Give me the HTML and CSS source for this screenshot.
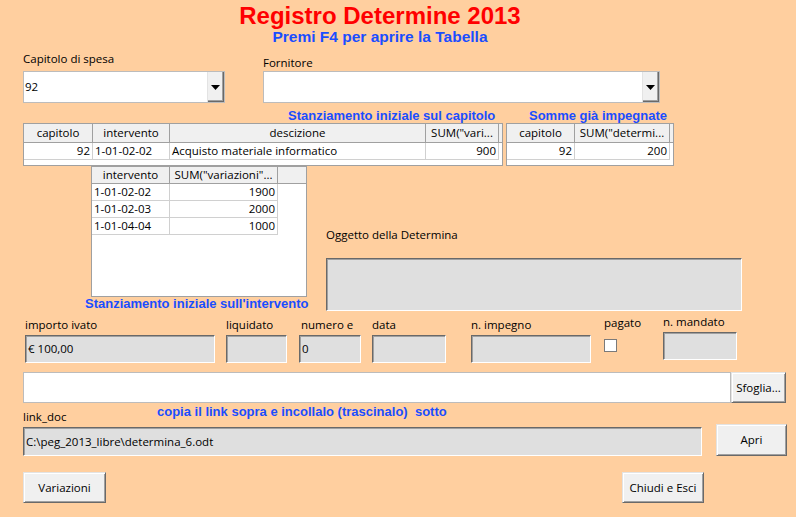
FILE: index.html
```html
<!DOCTYPE html>
<html lang="it">
<head>
<meta charset="utf-8">
<title>Registro Determine 2013</title>
<link rel="stylesheet" href="styles.css">
</head>
<body>
<div class="form">
  <header class="head">
    <h1 class="title">Registro Determine 2013</h1>
    <p class="subtitle">Premi F4 per aprire la Tabella</p>
  </header>

  <div class="row combos">
    <div class="group g-capitolo">
      <div class="lbl">Capitolo di spesa</div>
      <div class="combo">
        <span class="combo-text">92</span>
        <span class="drop"><svg width="9" height="5" viewBox="0 0 9 5"><polygon points="0,0 9,0 4.5,5" fill="#000"/></svg></span>
      </div>
    </div>
    <div class="group g-fornitore">
      <div class="lbl">Fornitore</div>
      <div class="combo">
        <span class="combo-text"></span>
        <span class="drop"><svg width="9" height="5" viewBox="0 0 9 5"><polygon points="0,0 9,0 4.5,5" fill="#000"/></svg></span>
      </div>
    </div>
  </div>

  <div class="row captions">
    <span class="blue cap-capitolo">Stanziamento iniziale sul capitolo</span>
    <span class="blue cap-somme">Somme già impegnate</span>
  </div>

  <div class="row tables">
    <div class="gtable t-capitolo">
      <div class="th">capitolo</div>
      <div class="th">intervento</div>
      <div class="th">descizione</div>
      <div class="th">SUM("vari...</div>
      <div class="th th-fill"></div>
      <div class="td num">92</div>
      <div class="td">1-01-02-02</div>
      <div class="td">Acquisto materiale informatico</div>
      <div class="td num">900</div>
      <div class="td-fill"></div>
    </div>
    <div class="gtable t-somme">
      <div class="th">capitolo</div>
      <div class="th">SUM("determi...</div>
      <div class="th th-fill"></div>
      <div class="td num">92</div>
      <div class="td num">200</div>
      <div class="td-fill"></div>
    </div>
  </div>

  <div class="row mid">
    <div class="mid-left">
      <div class="gtable t-intervento">
        <div class="th">intervento</div>
        <div class="th">SUM("variazioni"...</div>
        <div class="th th-fill"></div>
        <div class="td">1-01-02-02</div>
        <div class="td num">1900</div>
        <div class="td-fill"></div>
        <div class="td">1-01-02-03</div>
        <div class="td num">2000</div>
        <div class="td-fill"></div>
        <div class="td">1-01-04-04</div>
        <div class="td num">1000</div>
        <div class="td-fill"></div>
      </div>
      <div class="blue cap-intervento">Stanziamento iniziale sull'intervento</div>
    </div>
    <div class="mid-right">
      <div class="lbl lbl-oggetto">Oggetto della Determina</div>
      <div class="fld fld-oggetto"></div>
    </div>
  </div>

  <div class="row fields">
    <div class="group g-importo">
      <div class="lbl">importo ivato</div>
      <div class="fld">€ 100,00</div>
    </div>
    <div class="group g-liquidato">
      <div class="lbl">liquidato</div>
      <div class="fld"></div>
    </div>
    <div class="group g-numero">
      <div class="lbl">numero e</div>
      <div class="fld">0</div>
    </div>
    <div class="group g-data">
      <div class="lbl">data</div>
      <div class="fld"></div>
    </div>
    <div class="group g-impegno">
      <div class="lbl">n. impegno</div>
      <div class="fld"></div>
    </div>
    <div class="group g-pagato">
      <div class="lbl">pagato</div>
      <div class="check"></div>
    </div>
    <div class="group g-mandato">
      <div class="lbl">n. mandato</div>
      <div class="fld"></div>
    </div>
  </div>

  <div class="row browse">
    <div class="textbox"></div>
    <div class="btn btn-sfoglia">Sfoglia...</div>
  </div>

  <div class="row linklabels">
    <div class="lbl lbl-link">link_doc</div>
    <div class="blue cap-copia">copia il link sopra e incollalo (trascinalo)&nbsp; sotto</div>
  </div>

  <div class="row link">
    <div class="fld fld-link">C:\peg_2013_libre\determina_6.odt</div>
    <div class="btn btn-apri">Apri</div>
  </div>

  <div class="row buttons">
    <div class="btn btn-variazioni">Variazioni</div>
    <div class="btn btn-chiudi">Chiudi e Esci</div>
  </div>
</div>
</body>
</html>
```

FILE: styles.css
```css
* { box-sizing: border-box; }
html, body { margin: 0; padding: 0; background: #ffcf9f; }

.form {
  width: 796px;
  height: 517px;
  overflow: hidden;
  background: #ffcf9f;
  font-family: "Open Sans", "Noto Sans", sans-serif;
  font-size: 11.5px;
  line-height: 14px;
  color: #000;
}

/* header */
.head { width: 760px; text-align: center; padding-top: 2px; }
.title {
  margin: 0;
  font: bold 24px/27px "Liberation Sans", Arial, sans-serif;
  color: #ff0000;
}
.subtitle {
  margin: 0;
  font: bold 15.5px/16px "Liberation Sans", Arial, sans-serif;
  color: #1a4dff;
}

.blue {
  font: bold 13px/14px "Liberation Sans", Arial, sans-serif;
  color: #1a4dff;
  white-space: nowrap;
}

.row { display: flex; }
.group { display: flex; flex-direction: column; }
.lbl { white-space: nowrap; line-height: 14px; }

/* grey fields */
.fld {
  height: 28px;
  background: #dfdfdf;
  border-style: solid;
  border-width: 1px;
  border-color: #696969 #fff #fff #696969;
  box-shadow: inset 1px 1px 0 #a0a0a0;
  padding-left: 2px;
  line-height: 26px;
  white-space: nowrap;
  overflow: hidden;
}

/* buttons */
.btn {
  background: #f0f0f0;
  border: 1px solid;
  border-color: #e3e3e3 #696969 #696969 #e3e3e3;
  box-shadow: inset 1px 1px 0 #fff, inset -1px -1px 0 #a0a0a0;
  display: flex;
  align-items: center;
  justify-content: center;
  white-space: nowrap;
}

/* combos */
.combos { padding-left: 23px; margin-top: 7px; align-items: flex-end; }
.g-capitolo { width: 202px; }
.g-capitolo .lbl { margin-bottom: 5px; }
.g-fornitore { width: 397px; margin-left: 38px; }
.g-fornitore .lbl { margin-bottom: 1px; }
.combo {
  height: 32px;
  display: flex;
  background: #fff;
  border: 1px solid #bcbcbc;
}
.combo-text { flex: 1; padding-left: 1px; line-height: 30px; }
.drop {
  width: 17px;
  display: flex;
  align-items: center;
  justify-content: center;
  background: #f0f0f0;
  border-left: 1px solid #e3e3e3;
  box-shadow: inset -1px -1px 0 #696969, inset -2px -2px 0 #a0a0a0;
}
.drop svg { display: block; margin-left: -1px; }

/* captions */
.captions { margin-top: 6px; padding-left: 288px; }
.cap-capitolo { display: inline-block; width: 241px; }

/* tables */
.tables { padding-left: 23px; }
.gtable {
  display: grid;
  background: #fff;
  border: 1px solid #a0a0a0;
  align-content: start;
}
.th {
  background: #f0f0f0;
  border-right: 1px solid #a0a0a0;
  border-bottom: 1px solid #a0a0a0;
  text-align: center;
  white-space: nowrap;
  overflow: hidden;
  height: 19px;
  line-height: 18px;
}
.th-fill { border-right: 0; }
.td {
  border-right: 1px solid #d0d0d0;
  border-bottom: 1px solid #d0d0d0;
  height: 17px;
  line-height: 16px;
  padding: 0 2px;
  white-space: nowrap;
  overflow: hidden;
}
.num { text-align: right; }
.t-capitolo {
  width: 480px;
  height: 43px;
  grid-template-columns: 69px 77px 256px 73px 1fr;
}
.t-somme {
  width: 168px;
  height: 43px;
  margin-left: 3px;
  grid-template-columns: 68px 95px 1fr;
}

/* middle */
.mid { padding-left: 85px; }
.mid-left { width: 227px; }
.t-intervento {
  margin-left: 6px;
  width: 216px;
  height: 131px;
  grid-template-columns: 78px 108px 1fr;
}
.t-intervento .th { height: 17px; line-height: 16px; }
.cap-intervento { line-height: 14px; }
.mid-right { margin-left: 14px; width: 416px; }
.lbl-oggetto { margin-top: 62px; }
.mid-right .fld-oggetto { margin-top: 16px; height: 53px; }

/* field row */
.fields { padding-left: 25px; align-items: flex-start; }
.fields .lbl { margin-top: 7px; }
.fields .fld { margin-top: 3px; }
.g-importo { width: 190px; }
.g-liquidato { width: 61px; margin-left: 11px; }
.g-numero { width: 62px; margin-left: 12px; }
.g-numero .lbl { padding-left: 2px; }
.g-data { width: 74px; margin-left: 11px; }
.g-impegno { width: 120px; margin-left: 25px; }
.g-pagato { width: 40px; margin-left: 13px; }
.fields .g-pagato .lbl { margin-top: 5px; }
.check {
  width: 13px;
  height: 13px;
  margin-top: 9px;
  background: #fff;
  border: 1px solid #7a7a7a;
}
.g-mandato { width: 74px; margin-left: 19px; }
.fields .g-mandato .lbl { margin-top: 4px; }

/* browse row */
.browse { padding-left: 23px; margin-top: 9px; height: 31px; }
.textbox {
  width: 708px;
  background: #fff;
  border: 1px solid #bcbcbc;
}
.btn-sfoglia { width: 55px; }

/* link labels */
.linklabels { padding-left: 23px; height: 21px; align-items: flex-start; }
.lbl-link { width: 134px; margin-top: 7px; }
.cap-copia { margin-top: 2px; }

/* link row */
.link { padding-left: 23px; align-items: flex-start; }
.link .fld-link { width: 679px; height: 29px; margin-top: 3px; line-height: 27px; }
.btn-apri { width: 71px; height: 32px; margin-left: 14px; }

/* bottom buttons */
.buttons {
  margin-top: 16px;
  padding: 0 92px 0 23px;
  justify-content: space-between;
}
.btn-variazioni { width: 83px; height: 31px; }
.btn-chiudi { width: 82px; height: 31px; }
```
